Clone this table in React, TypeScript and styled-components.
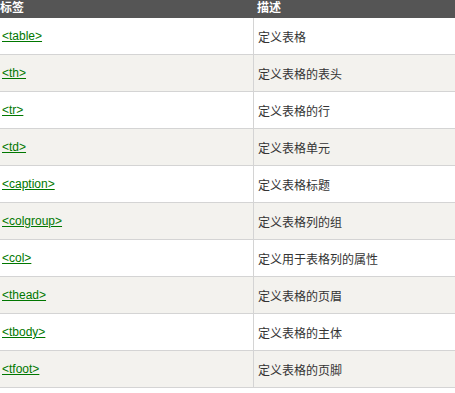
import React from "react";
import styled, { createGlobalStyle } from "styled-components";

const Global = createGlobalStyle`
  html, body { margin: 0; padding: 0; background: #fff; }
  body { font-family: Arial, "Liberation Sans", "Noto Sans CJK SC", sans-serif; font-size: 12px; }
`;

const Table = styled.div`
  width: 455px;
  display: flex;
  flex-direction: column;
`;

const HeadRow = styled.div`
  display: grid;
  grid-template-columns: 254px 1fr;
  height: 18px;
  background: #555555;
  color: #ffffff;
  font-weight: bold;
  line-height: 16px;
`;

const HeadCell = styled.div<{ $pad: number }>`
  padding-left: ${(p) => p.$pad}px;
  font-family: "Liberation Sans", "Noto Sans CJK SC", sans-serif;
`;

const Row = styled.div<{ $alt: boolean }>`
  display: grid;
  grid-template-columns: 254px 1fr;
  height: 37px;
  box-sizing: border-box;
  border-bottom: 1px solid #d4d4d4;
  background: ${(p) => (p.$alt ? "#f3f2ee" : "#ffffff")};
`;

const TagCell = styled.div`
  display: flex;
  align-items: center;
  padding-left: 2px;
  border-right: 1px solid #d4d4d4;
`;

const Link = styled.a`
  color: #007700;
  text-decoration: underline;
  font-family: "Liberation Sans", sans-serif;
  font-size: 12px;
`;

const DescCell = styled.div`
  display: flex;
  align-items: center;
  padding-left: 4px;
  color: #333333;
  font-family: "Noto Sans CJK SC", sans-serif;
  font-size: 12px;
`;

const rows: [string, string][] = [
  ["<table>", "定义表格"],
  ["<th>", "定义表格的表头"],
  ["<tr>", "定义表格的行"],
  ["<td>", "定义表格单元"],
  ["<caption>", "定义表格标题"],
  ["<colgroup>", "定义表格列的组"],
  ["<col>", "定义用于表格列的属性"],
  ["<thead>", "定义表格的页眉"],
  ["<tbody>", "定义表格的主体"],
  ["<tfoot>", "定义表格的页脚"],
];

export default function App() {
  return (
    <>
      <Global />
      <Table>
        <HeadRow>
          <HeadCell $pad={0}>标签</HeadCell>
          <HeadCell $pad={3}>描述</HeadCell>
        </HeadRow>
        {rows.map(([tag, desc], i) => (
          <Row key={tag} $alt={i % 2 === 1}>
            <TagCell>
              <Link href="#">{tag}</Link>
            </TagCell>
            <DescCell>{desc}</DescCell>
          </Row>
        ))}
      </Table>
    </>
  );
}
